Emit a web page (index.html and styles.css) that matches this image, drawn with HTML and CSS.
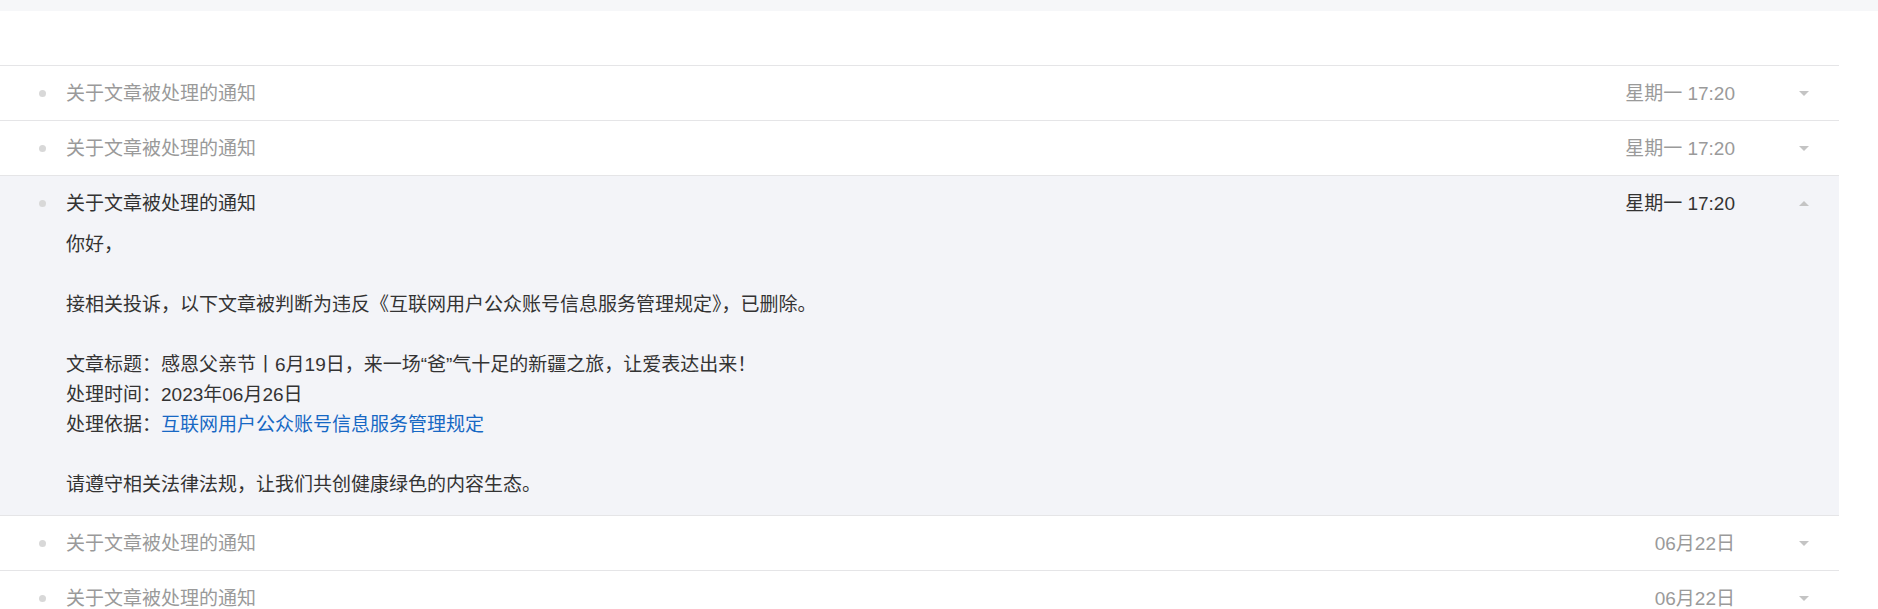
FILE: index.html
```html
<!DOCTYPE html>
<html lang="zh-CN">
<head>
  <meta charset="UTF-8" />
  <meta name="viewport" content="width=device-width, initial-scale=1.0"/>
  <title>通知</title>
  <link rel="stylesheet" href="styles.css">
</head>
<body>

  <div class="topbar"></div>

  <div class="notices">
    <div class="notice-spacer"></div>

    <div class="notice">
      <div class="notice-head">
        <span class="dot"></span>
        <span class="notice-title">关于文章被处理的通知</span>
        <span class="notice-time">星期一 17:20</span>
        <span class="arrow"></span>
      </div>
    </div>

    <div class="notice">
      <div class="notice-head">
        <span class="dot"></span>
        <span class="notice-title">关于文章被处理的通知</span>
        <span class="notice-time">星期一 17:20</span>
        <span class="arrow"></span>
      </div>
    </div>

    <div class="notice open">
      <div class="notice-head">
        <span class="dot"></span>
        <span class="notice-title">关于文章被处理的通知</span>
        <span class="notice-time">星期一 17:20</span>
        <span class="arrow"></span>
      </div>
      <div class="notice-body">
        <p>你好，</p>
        <p class="blank"></p>
        <p>接相关投诉，以下文章被判断为违反《互联网用户公众账号信息服务管理规定》，已删除。</p>
        <p class="blank"></p>
        <p>文章标题：感恩父亲节丨6月19日，来一场“爸”气十足的新疆之旅，让爱表达出来！</p>
        <p>处理时间：2023年06月26日</p>
        <p>处理依据：<a href="#">互联网用户公众账号信息服务管理规定</a></p>
        <p class="blank"></p>
        <p>请遵守相关法律法规，让我们共创健康绿色的内容生态。</p>
      </div>
    </div>

    <div class="notice">
      <div class="notice-head">
        <span class="dot"></span>
        <span class="notice-title">关于文章被处理的通知</span>
        <span class="notice-time">06月22日</span>
        <span class="arrow"></span>
      </div>
    </div>

    <div class="notice">
      <div class="notice-head">
        <span class="dot"></span>
        <span class="notice-title">关于文章被处理的通知</span>
        <span class="notice-time">06月22日</span>
        <span class="arrow"></span>
      </div>
    </div>
  </div>

</body>
</html>
```

FILE: styles.css
```css
body {
  margin: 0;
  background-color: #fff;
  font-family: "Liberation Sans", "Noto Sans CJK SC", sans-serif;
  font-size: 19px;
  color: #333;
}

.topbar {
  height: 11px;
  background-color: #f6f7f9;
}

.notices {
  width: 1839px;
}

.notice-spacer {
  height: 54px;
}

.notice {
  border-top: 1px solid #e5e5e7;
}

.notice-head {
  display: flex;
  align-items: center;
  height: 54px;
  padding: 0 30px 0 39px;
  color: #9a9a9a;
}

.dot {
  width: 7px;
  height: 7px;
  border-radius: 50%;
  background-color: #d8d8d8;
  margin-right: 20px;
  flex-shrink: 0;
}

.notice-title {
  flex: 1;
  margin-bottom: 4px;
}

.notice-time {
  margin-bottom: 4px;
}

.arrow {
  width: 0;
  height: 0;
  margin-left: 64px;
  border-left: 5px solid transparent;
  border-right: 5px solid transparent;
  border-top: 5px solid #c4c4c4;
}

/* Expanded */
.notice.open {
  background-color: #f3f4f8;
}

.notice.open .notice-head {
  color: #333;
}

.notice.open .arrow {
  border-top: none;
  border-bottom: 5px solid #c4c4c4;
}

.notice-body {
  padding: 0 0 15px 66px;
  line-height: 30px;
}

.notice-body p {
  margin: 0;
}

.notice-body .blank {
  height: 30px;
}

.notice-body a {
  color: #1768c4;
  text-decoration: none;
}
```
